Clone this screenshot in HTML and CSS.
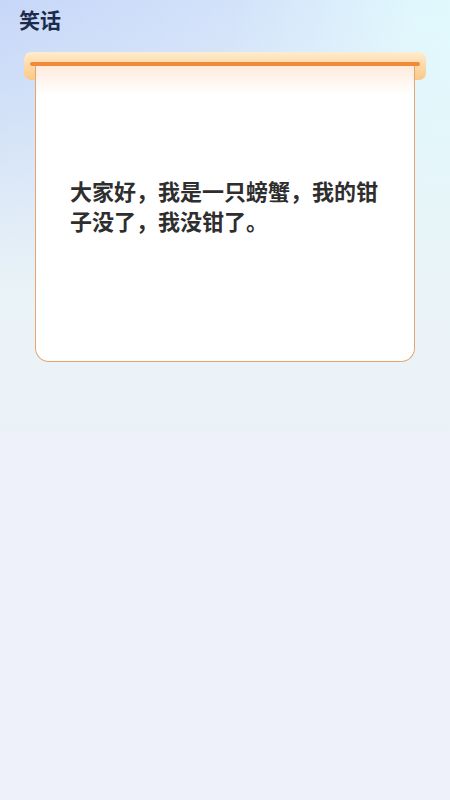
FILE: index.html
```html
<!DOCTYPE html>
<html lang="zh-CN">
<head>
<meta charset="utf-8">
<title>笑话</title>
<link rel="stylesheet" href="styles.css">
</head>
<body>
<div class="page">
  <header class="header">
    <h1 class="title">笑话</h1>
  </header>
  <section class="scroll">
    <div class="rod"><div class="rod-bar"></div></div>
    <div class="card">
      <p class="joke">大家好，我是一只螃蟹，我的钳子没了，我没钳了。</p>
    </div>
  </section>
</div>
</body>
</html>
```

FILE: styles.css
```css
* { box-sizing: border-box; }
html, body { margin: 0; padding: 0; }
body {
  width: 450px;
  height: 800px;
  overflow: hidden;
  font-family: "Noto Sans CJK SC", "Noto Sans", sans-serif;
  background: #eef1fa;
}
.page {
  height: 800px;
  background:
    linear-gradient(to bottom, rgba(234,243,247,0) 0px, rgba(234,243,247,0.35) 120px, #eaf3f7 300px, #ebf2f7 432px, rgba(0,0,0,0) 432px),
    linear-gradient(100deg, #c6d7f8 0%, #d3e2fa 45%, #e0f8fd 80%, #e0fafd 100%) top / 100% 432px no-repeat,
    #eef1fa;
}
.header {
  height: 40px;
  padding: 5px 0 0 19px;
}
.title {
  margin: 0;
  font-size: 21px;
  line-height: 29px;
  font-weight: 700;
  color: #1c2a4c;
}
.scroll {
  margin: 12px 24px 0;
}
.rod {
  height: 28px;
  border-radius: 7px;
  padding: 10px 6px 0;
  background: linear-gradient(to bottom, #feeccf 0%, #fdd9a6 50%, #fbc887 100%);
}
.rod-bar {
  height: 4px;
  border-radius: 2px;
  background: #ee8a3a;
}
.card {
  position: relative;
  margin: -14px 11px 0;
  height: 296px;
  border: 1.5px solid #e3a672;
  border-top: none;
  border-radius: 0 0 14px 14px;
  background: linear-gradient(to bottom, #feeadb 0px, #fff5ee 14px, #ffffff 30px);
  display: flex;
  align-items: center;
  padding: 0 33px 17px 34px;
}
.joke {
  margin: 0;
  font-size: 22px;
  line-height: 30px;
  font-weight: 700;
  color: #2e2e2e;
}
```
